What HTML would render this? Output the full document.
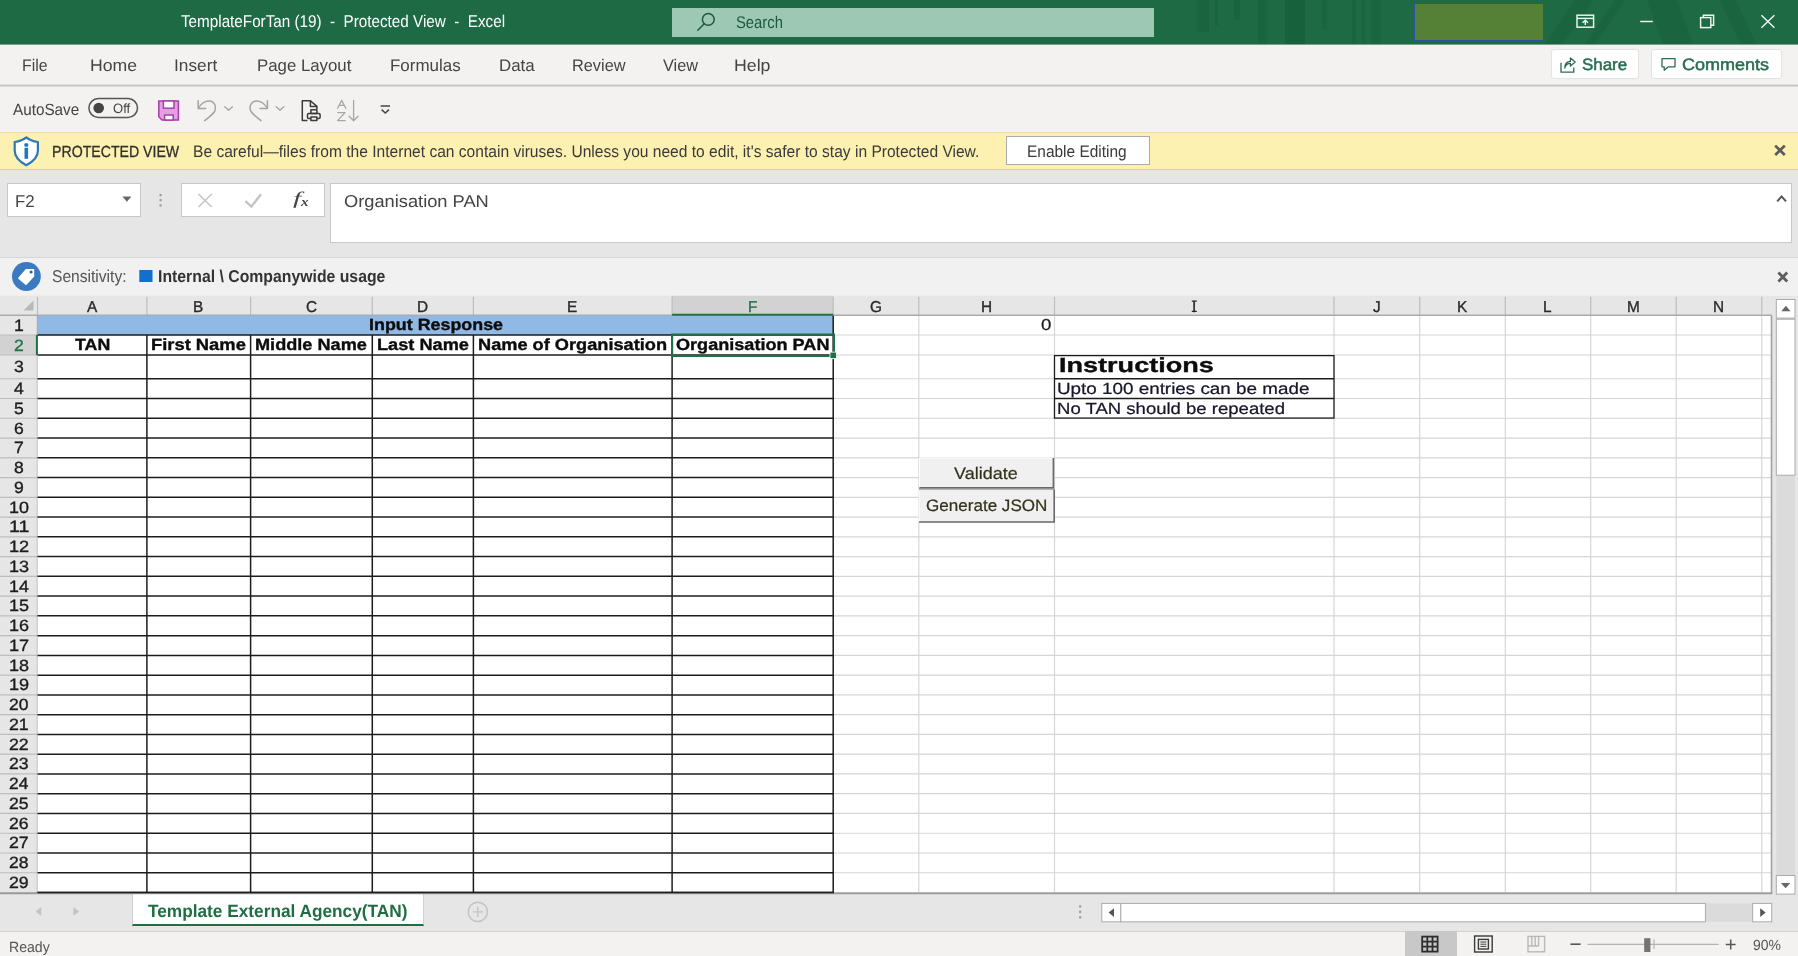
<!DOCTYPE html>
<html><head><meta charset="utf-8"><title>TemplateForTan (19) - Protected View - Excel</title>
<style>
*{margin:0;padding:0;box-sizing:border-box;}
html,body{text-rendering:geometricPrecision;width:1798px;height:956px;overflow:hidden;background:#e6e6e6;font-family:"Liberation Sans",sans-serif;}
body{position:relative;}
.b{position:absolute;}
.t{position:absolute;white-space:pre;line-height:1;transform-origin:0 0;font-family:"Liberation Sans",sans-serif;}
.ov{position:absolute;left:0;top:0;}
#title{left:0;top:0;width:1798px;height:45px;background:#1d6a44;overflow:hidden;border-bottom:1px solid #73a089;}
#title i{position:absolute;top:0;height:44px;background:rgba(0,40,20,0.08);display:block;}
#search{left:671.6px;top:7.8px;width:482.4px;height:29px;background:#9dc8b4;}
#redact{left:1413.6px;top:3.2px;width:130.4px;height:38px;background:#548135;border:1.5px solid #3050a6;}
#ribbon{left:0;top:45px;width:1798px;height:87px;background:#f3f2f1;}
#ribsep{left:0;top:83.6px;width:1798px;height:3.4px;background:linear-gradient(#ecebea,#c9c8c7 45%,#c4c3c2 60%,#e9e8e7);}
.rbtn{background:#fff;border:1px solid #e5e3e1;border-radius:3px;}
#pv{left:0;top:131.9px;width:1798px;height:37.8px;background:#fcf1b0;border-top:1px solid #ebe0a2;border-bottom:1px solid #ddd193;}
#enable{left:1006.4px;top:135.8px;width:143.2px;height:28.8px;background:#fff;border:1px solid #ababab;}
#fbar{left:0;top:169.7px;width:1798px;height:87.5px;background:#e6e6e6;}
.wbox{background:#fff;border:1px solid #c8c8c8;}
#sens{left:0;top:257.2px;width:1798px;height:38.4px;background:#f1f1f1;border-top:1.2px solid #d6d6d6;}
#tabbar{left:0;top:893.6px;width:1798px;height:37.6px;background:#e6e6e6;}
#sheet{left:132.4px;top:893.8px;width:291.4px;height:32px;background:#fff;border-bottom:2.6px solid #1f7145;border-left:1px solid #d0d0d0;border-right:1px solid #d0d0d0;}
#status{left:0;top:930.8px;width:1798px;height:25.2px;background:#f3f2f1;border-top:1px solid #d2d2d2;}
#normalbtn{left:1404.8px;top:931.4px;width:52.6px;height:24.6px;background:#c8c8c8;}
.ui{position:absolute;left:0;top:0;width:1798px;height:956px;will-change:transform;}
.sheet{position:absolute;left:0;top:0;width:0;height:0;}

</style></head>
<body>
<div class="b" id="title">
<i style="left:1197px;width:12px;height:32px"></i><i style="left:1215px;width:3px;height:26px"></i><i style="left:1234px;width:6px;height:20px"></i><i style="left:1258px;width:9px"></i><i style="left:1285px;width:20px;background:rgba(0,40,20,0.14)"></i><i style="left:1322px;width:5px;height:30px"></i><i style="left:1352px;width:4px"></i><i style="left:1362px;width:3px"></i><i style="left:1371px;width:10px"></i><i style="left:1560px;width:18px;transform:skewX(-35deg)"></i><i style="left:1600px;width:10px;transform:skewX(-35deg)"></i><i style="left:1655px;width:30px;transform:skewX(20deg)"></i><i style="left:1730px;width:16px;transform:skewX(25deg)"></i>
</div>
<div class="b" id="search"></div>
<div class="b" id="redact"></div>
<div class="b" id="ribbon"></div>
<div class="b" id="ribsep"></div>
<div class="b rbtn" style="left:1551.2px;top:49.4px;width:87.8px;height:30px"></div>
<div class="b rbtn" style="left:1651.2px;top:49.4px;width:130.6px;height:30px"></div>
<div class="b" id="pv"></div>
<div class="b" id="enable"></div>
<div class="b" id="fbar"></div>
<div class="b wbox" style="left:6.8px;top:183.4px;width:133.9px;height:33.8px"></div>
<div class="b wbox" style="left:180.5px;top:183.4px;width:144.4px;height:33.8px"></div>
<div class="b wbox" style="left:329.5px;top:183.4px;width:1462.8px;height:60px"></div>
<div class="b" id="sens"></div>
<div class="b" id="tabbar"></div>
<div class="b" id="sheet"></div>
<div class="b" id="status"></div>
<div class="b" id="normalbtn"></div>

<svg class="ov" width="1798" height="956" viewBox="0 0 1798 956">
<rect x="0" y="295.8" width="1771.5" height="19.5" fill="#e6e6e6"/>
<rect x="0" y="315.3" width="37.5" height="577.21" fill="#e6e6e6"/>
<rect x="37.5" y="315.3" width="1734.0" height="577.21" fill="#ffffff"/>
<rect x="672.1" y="295.8" width="161.10000000000002" height="19.5" fill="#d2d2d2"/>
<rect x="0" y="335.0" width="37.5" height="20.0" fill="#d2d2d2"/>
<line x1="37.5" y1="335.0" x2="1771.5" y2="335.0" stroke="#d6d6d6" stroke-width="1.2"/>
<line x1="37.5" y1="355.0" x2="1771.5" y2="355.0" stroke="#d6d6d6" stroke-width="1.2"/>
<line x1="37.5" y1="378.75" x2="1771.5" y2="378.75" stroke="#d6d6d6" stroke-width="1.2"/>
<line x1="37.5" y1="398.51" x2="1771.5" y2="398.51" stroke="#d6d6d6" stroke-width="1.2"/>
<line x1="37.5" y1="418.27" x2="1771.5" y2="418.27" stroke="#d6d6d6" stroke-width="1.2"/>
<line x1="37.5" y1="438.03" x2="1771.5" y2="438.03" stroke="#d6d6d6" stroke-width="1.2"/>
<line x1="37.5" y1="457.79" x2="1771.5" y2="457.79" stroke="#d6d6d6" stroke-width="1.2"/>
<line x1="37.5" y1="477.55" x2="1771.5" y2="477.55" stroke="#d6d6d6" stroke-width="1.2"/>
<line x1="37.5" y1="497.31" x2="1771.5" y2="497.31" stroke="#d6d6d6" stroke-width="1.2"/>
<line x1="37.5" y1="517.07" x2="1771.5" y2="517.07" stroke="#d6d6d6" stroke-width="1.2"/>
<line x1="37.5" y1="536.83" x2="1771.5" y2="536.83" stroke="#d6d6d6" stroke-width="1.2"/>
<line x1="37.5" y1="556.59" x2="1771.5" y2="556.59" stroke="#d6d6d6" stroke-width="1.2"/>
<line x1="37.5" y1="576.35" x2="1771.5" y2="576.35" stroke="#d6d6d6" stroke-width="1.2"/>
<line x1="37.5" y1="596.11" x2="1771.5" y2="596.11" stroke="#d6d6d6" stroke-width="1.2"/>
<line x1="37.5" y1="615.87" x2="1771.5" y2="615.87" stroke="#d6d6d6" stroke-width="1.2"/>
<line x1="37.5" y1="635.63" x2="1771.5" y2="635.63" stroke="#d6d6d6" stroke-width="1.2"/>
<line x1="37.5" y1="655.3900000000001" x2="1771.5" y2="655.3900000000001" stroke="#d6d6d6" stroke-width="1.2"/>
<line x1="37.5" y1="675.1500000000001" x2="1771.5" y2="675.1500000000001" stroke="#d6d6d6" stroke-width="1.2"/>
<line x1="37.5" y1="694.9100000000001" x2="1771.5" y2="694.9100000000001" stroke="#d6d6d6" stroke-width="1.2"/>
<line x1="37.5" y1="714.6700000000001" x2="1771.5" y2="714.6700000000001" stroke="#d6d6d6" stroke-width="1.2"/>
<line x1="37.5" y1="734.4300000000001" x2="1771.5" y2="734.4300000000001" stroke="#d6d6d6" stroke-width="1.2"/>
<line x1="37.5" y1="754.19" x2="1771.5" y2="754.19" stroke="#d6d6d6" stroke-width="1.2"/>
<line x1="37.5" y1="773.95" x2="1771.5" y2="773.95" stroke="#d6d6d6" stroke-width="1.2"/>
<line x1="37.5" y1="793.71" x2="1771.5" y2="793.71" stroke="#d6d6d6" stroke-width="1.2"/>
<line x1="37.5" y1="813.47" x2="1771.5" y2="813.47" stroke="#d6d6d6" stroke-width="1.2"/>
<line x1="37.5" y1="833.23" x2="1771.5" y2="833.23" stroke="#d6d6d6" stroke-width="1.2"/>
<line x1="37.5" y1="852.99" x2="1771.5" y2="852.99" stroke="#d6d6d6" stroke-width="1.2"/>
<line x1="37.5" y1="872.75" x2="1771.5" y2="872.75" stroke="#d6d6d6" stroke-width="1.2"/>
<line x1="37.5" y1="892.51" x2="1771.5" y2="892.51" stroke="#d6d6d6" stroke-width="1.2"/>
<line x1="146.9" y1="315.3" x2="146.9" y2="892.51" stroke="#d6d6d6" stroke-width="1.2"/>
<line x1="250.6" y1="315.3" x2="250.6" y2="892.51" stroke="#d6d6d6" stroke-width="1.2"/>
<line x1="372.3" y1="315.3" x2="372.3" y2="892.51" stroke="#d6d6d6" stroke-width="1.2"/>
<line x1="473.4" y1="315.3" x2="473.4" y2="892.51" stroke="#d6d6d6" stroke-width="1.2"/>
<line x1="672.1" y1="315.3" x2="672.1" y2="892.51" stroke="#d6d6d6" stroke-width="1.2"/>
<line x1="833.2" y1="315.3" x2="833.2" y2="892.51" stroke="#d6d6d6" stroke-width="1.2"/>
<line x1="918.8" y1="315.3" x2="918.8" y2="892.51" stroke="#d6d6d6" stroke-width="1.2"/>
<line x1="1054.5" y1="315.3" x2="1054.5" y2="892.51" stroke="#d6d6d6" stroke-width="1.2"/>
<line x1="1334" y1="315.3" x2="1334" y2="892.51" stroke="#d6d6d6" stroke-width="1.2"/>
<line x1="1419.7" y1="315.3" x2="1419.7" y2="892.51" stroke="#d6d6d6" stroke-width="1.2"/>
<line x1="1505.3" y1="315.3" x2="1505.3" y2="892.51" stroke="#d6d6d6" stroke-width="1.2"/>
<line x1="1590.7" y1="315.3" x2="1590.7" y2="892.51" stroke="#d6d6d6" stroke-width="1.2"/>
<line x1="1676.2" y1="315.3" x2="1676.2" y2="892.51" stroke="#d6d6d6" stroke-width="1.2"/>
<line x1="1761.8" y1="315.3" x2="1761.8" y2="892.51" stroke="#d6d6d6" stroke-width="1.2"/>
<line x1="37.5" y1="296.8" x2="37.5" y2="315.3" stroke="#bdbdbd" stroke-width="1.2"/>
<line x1="146.9" y1="296.8" x2="146.9" y2="315.3" stroke="#bdbdbd" stroke-width="1.2"/>
<line x1="250.6" y1="296.8" x2="250.6" y2="315.3" stroke="#bdbdbd" stroke-width="1.2"/>
<line x1="372.3" y1="296.8" x2="372.3" y2="315.3" stroke="#bdbdbd" stroke-width="1.2"/>
<line x1="473.4" y1="296.8" x2="473.4" y2="315.3" stroke="#bdbdbd" stroke-width="1.2"/>
<line x1="672.1" y1="296.8" x2="672.1" y2="315.3" stroke="#bdbdbd" stroke-width="1.2"/>
<line x1="833.2" y1="296.8" x2="833.2" y2="315.3" stroke="#bdbdbd" stroke-width="1.2"/>
<line x1="918.8" y1="296.8" x2="918.8" y2="315.3" stroke="#bdbdbd" stroke-width="1.2"/>
<line x1="1054.5" y1="296.8" x2="1054.5" y2="315.3" stroke="#bdbdbd" stroke-width="1.2"/>
<line x1="1334" y1="296.8" x2="1334" y2="315.3" stroke="#bdbdbd" stroke-width="1.2"/>
<line x1="1419.7" y1="296.8" x2="1419.7" y2="315.3" stroke="#bdbdbd" stroke-width="1.2"/>
<line x1="1505.3" y1="296.8" x2="1505.3" y2="315.3" stroke="#bdbdbd" stroke-width="1.2"/>
<line x1="1590.7" y1="296.8" x2="1590.7" y2="315.3" stroke="#bdbdbd" stroke-width="1.2"/>
<line x1="1676.2" y1="296.8" x2="1676.2" y2="315.3" stroke="#bdbdbd" stroke-width="1.2"/>
<line x1="1761.8" y1="296.8" x2="1761.8" y2="315.3" stroke="#bdbdbd" stroke-width="1.2"/>
<line x1="0" y1="335.0" x2="37.5" y2="335.0" stroke="#bdbdbd" stroke-width="1.2"/>
<line x1="0" y1="355.0" x2="37.5" y2="355.0" stroke="#bdbdbd" stroke-width="1.2"/>
<line x1="0" y1="378.75" x2="37.5" y2="378.75" stroke="#bdbdbd" stroke-width="1.2"/>
<line x1="0" y1="398.51" x2="37.5" y2="398.51" stroke="#bdbdbd" stroke-width="1.2"/>
<line x1="0" y1="418.27" x2="37.5" y2="418.27" stroke="#bdbdbd" stroke-width="1.2"/>
<line x1="0" y1="438.03" x2="37.5" y2="438.03" stroke="#bdbdbd" stroke-width="1.2"/>
<line x1="0" y1="457.79" x2="37.5" y2="457.79" stroke="#bdbdbd" stroke-width="1.2"/>
<line x1="0" y1="477.55" x2="37.5" y2="477.55" stroke="#bdbdbd" stroke-width="1.2"/>
<line x1="0" y1="497.31" x2="37.5" y2="497.31" stroke="#bdbdbd" stroke-width="1.2"/>
<line x1="0" y1="517.07" x2="37.5" y2="517.07" stroke="#bdbdbd" stroke-width="1.2"/>
<line x1="0" y1="536.83" x2="37.5" y2="536.83" stroke="#bdbdbd" stroke-width="1.2"/>
<line x1="0" y1="556.59" x2="37.5" y2="556.59" stroke="#bdbdbd" stroke-width="1.2"/>
<line x1="0" y1="576.35" x2="37.5" y2="576.35" stroke="#bdbdbd" stroke-width="1.2"/>
<line x1="0" y1="596.11" x2="37.5" y2="596.11" stroke="#bdbdbd" stroke-width="1.2"/>
<line x1="0" y1="615.87" x2="37.5" y2="615.87" stroke="#bdbdbd" stroke-width="1.2"/>
<line x1="0" y1="635.63" x2="37.5" y2="635.63" stroke="#bdbdbd" stroke-width="1.2"/>
<line x1="0" y1="655.3900000000001" x2="37.5" y2="655.3900000000001" stroke="#bdbdbd" stroke-width="1.2"/>
<line x1="0" y1="675.1500000000001" x2="37.5" y2="675.1500000000001" stroke="#bdbdbd" stroke-width="1.2"/>
<line x1="0" y1="694.9100000000001" x2="37.5" y2="694.9100000000001" stroke="#bdbdbd" stroke-width="1.2"/>
<line x1="0" y1="714.6700000000001" x2="37.5" y2="714.6700000000001" stroke="#bdbdbd" stroke-width="1.2"/>
<line x1="0" y1="734.4300000000001" x2="37.5" y2="734.4300000000001" stroke="#bdbdbd" stroke-width="1.2"/>
<line x1="0" y1="754.19" x2="37.5" y2="754.19" stroke="#bdbdbd" stroke-width="1.2"/>
<line x1="0" y1="773.95" x2="37.5" y2="773.95" stroke="#bdbdbd" stroke-width="1.2"/>
<line x1="0" y1="793.71" x2="37.5" y2="793.71" stroke="#bdbdbd" stroke-width="1.2"/>
<line x1="0" y1="813.47" x2="37.5" y2="813.47" stroke="#bdbdbd" stroke-width="1.2"/>
<line x1="0" y1="833.23" x2="37.5" y2="833.23" stroke="#bdbdbd" stroke-width="1.2"/>
<line x1="0" y1="852.99" x2="37.5" y2="852.99" stroke="#bdbdbd" stroke-width="1.2"/>
<line x1="0" y1="872.75" x2="37.5" y2="872.75" stroke="#bdbdbd" stroke-width="1.2"/>
<line x1="0" y1="892.51" x2="37.5" y2="892.51" stroke="#bdbdbd" stroke-width="1.2"/>
<line x1="0" y1="315.3" x2="1771.5" y2="315.3" stroke="#ababab" stroke-width="1.4"/>
<line x1="37.5" y1="315.3" x2="37.5" y2="892.51" stroke="#a6a6a6" stroke-width="1.4"/>
<path d="M33.5 300.5 V310.5 H23.5 Z" fill="#b8b8b8"/>
<rect x="37.5" y="315.8" width="795.7" height="19.20000000000001" fill="#91b9e6"/>
<rect x="37.5" y="335.0" width="795.7" height="557.51" fill="#ffffff"/>
<line x1="37.5" y1="335.0" x2="833.9000000000001" y2="335.0" stroke="#1c1c1c" stroke-width="1.5"/>
<line x1="37.5" y1="355.0" x2="833.9000000000001" y2="355.0" stroke="#1c1c1c" stroke-width="1.5"/>
<line x1="37.5" y1="378.75" x2="833.9000000000001" y2="378.75" stroke="#1c1c1c" stroke-width="1.5"/>
<line x1="37.5" y1="398.51" x2="833.9000000000001" y2="398.51" stroke="#1c1c1c" stroke-width="1.5"/>
<line x1="37.5" y1="418.27" x2="833.9000000000001" y2="418.27" stroke="#1c1c1c" stroke-width="1.5"/>
<line x1="37.5" y1="438.03" x2="833.9000000000001" y2="438.03" stroke="#1c1c1c" stroke-width="1.5"/>
<line x1="37.5" y1="457.79" x2="833.9000000000001" y2="457.79" stroke="#1c1c1c" stroke-width="1.5"/>
<line x1="37.5" y1="477.55" x2="833.9000000000001" y2="477.55" stroke="#1c1c1c" stroke-width="1.5"/>
<line x1="37.5" y1="497.31" x2="833.9000000000001" y2="497.31" stroke="#1c1c1c" stroke-width="1.5"/>
<line x1="37.5" y1="517.07" x2="833.9000000000001" y2="517.07" stroke="#1c1c1c" stroke-width="1.5"/>
<line x1="37.5" y1="536.83" x2="833.9000000000001" y2="536.83" stroke="#1c1c1c" stroke-width="1.5"/>
<line x1="37.5" y1="556.59" x2="833.9000000000001" y2="556.59" stroke="#1c1c1c" stroke-width="1.5"/>
<line x1="37.5" y1="576.35" x2="833.9000000000001" y2="576.35" stroke="#1c1c1c" stroke-width="1.5"/>
<line x1="37.5" y1="596.11" x2="833.9000000000001" y2="596.11" stroke="#1c1c1c" stroke-width="1.5"/>
<line x1="37.5" y1="615.87" x2="833.9000000000001" y2="615.87" stroke="#1c1c1c" stroke-width="1.5"/>
<line x1="37.5" y1="635.63" x2="833.9000000000001" y2="635.63" stroke="#1c1c1c" stroke-width="1.5"/>
<line x1="37.5" y1="655.3900000000001" x2="833.9000000000001" y2="655.3900000000001" stroke="#1c1c1c" stroke-width="1.5"/>
<line x1="37.5" y1="675.1500000000001" x2="833.9000000000001" y2="675.1500000000001" stroke="#1c1c1c" stroke-width="1.5"/>
<line x1="37.5" y1="694.9100000000001" x2="833.9000000000001" y2="694.9100000000001" stroke="#1c1c1c" stroke-width="1.5"/>
<line x1="37.5" y1="714.6700000000001" x2="833.9000000000001" y2="714.6700000000001" stroke="#1c1c1c" stroke-width="1.5"/>
<line x1="37.5" y1="734.4300000000001" x2="833.9000000000001" y2="734.4300000000001" stroke="#1c1c1c" stroke-width="1.5"/>
<line x1="37.5" y1="754.19" x2="833.9000000000001" y2="754.19" stroke="#1c1c1c" stroke-width="1.5"/>
<line x1="37.5" y1="773.95" x2="833.9000000000001" y2="773.95" stroke="#1c1c1c" stroke-width="1.5"/>
<line x1="37.5" y1="793.71" x2="833.9000000000001" y2="793.71" stroke="#1c1c1c" stroke-width="1.5"/>
<line x1="37.5" y1="813.47" x2="833.9000000000001" y2="813.47" stroke="#1c1c1c" stroke-width="1.5"/>
<line x1="37.5" y1="833.23" x2="833.9000000000001" y2="833.23" stroke="#1c1c1c" stroke-width="1.5"/>
<line x1="37.5" y1="852.99" x2="833.9000000000001" y2="852.99" stroke="#1c1c1c" stroke-width="1.5"/>
<line x1="37.5" y1="872.75" x2="833.9000000000001" y2="872.75" stroke="#1c1c1c" stroke-width="1.5"/>
<line x1="37.5" y1="892.51" x2="833.9000000000001" y2="892.51" stroke="#1c1c1c" stroke-width="1.5"/>
<line x1="146.9" y1="335.0" x2="146.9" y2="892.51" stroke="#1c1c1c" stroke-width="1.5"/>
<line x1="250.6" y1="335.0" x2="250.6" y2="892.51" stroke="#1c1c1c" stroke-width="1.5"/>
<line x1="372.3" y1="335.0" x2="372.3" y2="892.51" stroke="#1c1c1c" stroke-width="1.5"/>
<line x1="473.4" y1="335.0" x2="473.4" y2="892.51" stroke="#1c1c1c" stroke-width="1.5"/>
<line x1="672.1" y1="335.0" x2="672.1" y2="892.51" stroke="#1c1c1c" stroke-width="1.5"/>
<line x1="833.2" y1="335.0" x2="833.2" y2="892.51" stroke="#1c1c1c" stroke-width="1.5"/>
<line x1="833.2" y1="315.7" x2="833.2" y2="335.0" stroke="#1c1c1c" stroke-width="1.5"/>
<rect x="1054.5" y="355.6" width="279.5" height="62.469999999999985" fill="#fff" stroke="#1c1c1c" stroke-width="1.3"/>
<line x1="1054.5" y1="378.75" x2="1334" y2="378.75" stroke="#1c1c1c" stroke-width="1.3"/>
<line x1="1054.5" y1="398.51" x2="1334" y2="398.51" stroke="#1c1c1c" stroke-width="1.3"/>
<rect x="672.1" y="334.6" width="161.80000000000007" height="21.299999999999976" fill="none" stroke="#1f7145" stroke-width="2.2"/>
<rect x="830.0" y="352.1" width="6.4" height="6.4" fill="#1f7145" stroke="#fff" stroke-width="0.8"/>
<line x1="672.1" y1="314.7" x2="833.2" y2="314.7" stroke="#1f7145" stroke-width="2"/>
<line x1="36.9" y1="335.0" x2="36.9" y2="355.0" stroke="#1f7145" stroke-width="2"/>
<line x1="1771.5" y1="315.3" x2="1771.5" y2="893.51" stroke="#a0a0a0" stroke-width="1.6"/>
<line x1="0" y1="893.31" x2="1772.3" y2="893.31" stroke="#9a9a9a" stroke-width="1.8"/>
<line x1="37.5" y1="892.51" x2="833.9000000000001" y2="892.51" stroke="#1c1c1c" stroke-width="1.5"/>
<!-- search magnifier -->
<g fill="none" stroke="#1d5a3a" stroke-width="1.5" stroke-linecap="round">
<circle cx="708.3" cy="19.4" r="5.9"/><path d="M704 24 L697.8 30.2"/>
</g>
<!-- window controls -->
<g fill="none" stroke="#eef6f1" stroke-width="1.45">
<rect x="1577" y="15.2" width="16.6" height="12"/><path d="M1577 18.4 H1593.6" /><path d="M1585.3 25 V20.4 M1582.6 22.8 L1585.3 20.2 L1588 22.8"/>
<path d="M1640.2 21.5 H1652.8"/>
<path d="M1703.4 17.4 V15.2 H1713.6 V25.2 H1711"/><rect x="1700.6" y="17.6" width="10.2" height="10"/>
<path d="M1761.4 15.2 L1774.4 27.8 M1774.4 15.2 L1761.4 27.8"/>
</g>
<!-- share icon -->
<g fill="none" stroke="#2a6c4e" stroke-width="1.3" stroke-linejoin="round">
<path d="M1561 62.8 V72.2 H1573.8 V67.4"/>
<path d="M1564.8 68 C1564.8 64 1567 61.6 1570.4 61.4 V58 L1575.2 62 L1570.4 66 V63.4 C1567.6 63.4 1565.6 65 1564.8 68 Z"/>
</g>
<!-- comment icon -->
<g fill="none" stroke="#2a6c4e" stroke-width="1.3" stroke-linejoin="round">
<path d="M1662 58.6 H1675 V66.8 H1668.4 L1664.2 70.2 V66.8 H1662 Z"/>
</g>
<!-- autosave toggle -->
<rect x="88.9" y="98.6" width="48.6" height="18.8" rx="9.4" fill="none" stroke="#555" stroke-width="1.5"/>
<circle cx="98.7" cy="108" r="5.3" fill="#444"/>
<!-- save icon -->
<g>
<path d="M158.8 101 H178.4 V120 H162 L158.8 116.8 Z" fill="#e69ee4" stroke="#a440a8" stroke-width="1.5" stroke-linejoin="miter"/>
<rect x="163.4" y="101" width="10.6" height="7.2" fill="#fff" stroke="#a440a8" stroke-width="1.5"/>
<rect x="164.6" y="115" width="8.6" height="5" fill="#fff" stroke="#a440a8" stroke-width="1.5"/>
</g>
<!-- undo -->
<g fill="none" stroke="#a3a3a3" stroke-width="1.5" stroke-linecap="round" stroke-linejoin="round">
<path d="M198.2 100.8 V108.4 H205.6"/>
<path d="M198.6 108 C201 103.4 205.6 100.4 210 101 C214.6 101.8 216.6 106.4 215 110.6 C213.6 114 209.4 116.8 204.6 120.6"/>
<path d="M224.8 106.8 L228.6 110.2 L232.4 106.8" stroke-width="1.3"/>
<!-- redo -->
<path d="M267.4 100.8 V108.4 H260"/>
<path d="M267 108 C264.6 103.4 260 100.4 255.6 101 C251 101.8 249 106.4 250.6 110.6 C252 114 256.2 116.8 261 120.6"/>
<path d="M276.2 106.8 L280 110.2 L283.8 106.8" stroke-width="1.3"/>
</g>
<!-- print preview -->
<g fill="none" stroke="#3a3a3a" stroke-width="1.5" stroke-linejoin="round">
<path d="M307.4 120.4 H302.3 V100.7 H310.4 L316.9 106.4 V109"/>
<path d="M310.4 100.7 V106.4 H316.9"/>
<rect x="310.9" y="109.8" width="6" height="3.8"/>
<rect x="307.5" y="113.6" width="12.6" height="4.8" rx="1.2"/>
<rect x="310.9" y="116.9" width="6" height="3.5" fill="#f3f2f1"/>
</g>
<!-- sort az -->
<g fill="none" stroke="#a6a6a6" stroke-width="1.3" stroke-linejoin="round" stroke-linecap="round">
<path d="M337.6 108.2 L341.7 100.4 L345.8 108.2 M339.2 105.4 H344.2"/>
<path d="M337.8 112.6 H345 L337.6 120.6 H345.2"/>
<path d="M353.6 100.4 V120.6 M349.2 116.2 L353.6 120.8 L358 116.2"/>
</g>
<!-- customize qat -->
<g fill="none" stroke="#444" stroke-width="1.5">
<path d="M380.6 106 H390"/><path d="M381.6 109.6 L385.3 113 L389 109.6"/>
</g>
<!-- shield -->
<path d="M26.3 137.4 C29.6 140.2 33.6 141.4 37.9 142 V150.5 C37.9 156.5 33.4 161.6 26.3 165.2 C19.2 161.6 14.7 156.5 14.7 150.5 V142 C19 141.4 23 140.2 26.3 137.4 Z" fill="#fff" stroke="#2f78b7" stroke-width="2.2" stroke-linejoin="round"/>
<rect x="24.4" y="143.3" width="3.8" height="3.4" rx="1" fill="#1f78c1"/><rect x="24.5" y="147.8" width="3.6" height="11" fill="#1f78c1"/>
<!-- pv close -->
<path d="M1775.2 145.6 L1784.8 155 M1784.8 145.6 L1775.2 155" stroke="#5a5a5a" stroke-width="2.7" fill="none"/>
<!-- name box dropdown -->
<path d="M122.4 196.4 H131.4 L126.9 201.8 Z" fill="#666"/>
<g fill="#9c9c9c"><rect x="159.5" y="194" width="2.2" height="2.2"/><rect x="159.5" y="199.1" width="2.2" height="2.2"/><rect x="159.5" y="204.3" width="2.2" height="2.2"/></g>
<!-- x / check -->
<g fill="none" stroke="#c4c4c4" stroke-width="1.5">
<path d="M198.4 194 L211.8 207 M211.8 194 L198.4 207"/>
<path d="M245.4 201.2 L251.4 206.6 L261 194.2" stroke-width="2.4"/>
</g>
<!-- formula expand chevron -->
<path d="M1777.2 201.4 L1781.6 196.4 L1786 201.4" fill="none" stroke="#555" stroke-width="2"/>
<!-- sensitivity icon -->
<circle cx="26.4" cy="276.5" r="14.4" fill="#3c7abf"/>
<path d="M34.2 269 H25.9 L18.4 277.6 Q17.8 278.4 18.6 279 L25.4 284.8 Q26.2 285.4 26.9 284.6 L34.2 276.6 Z" fill="#fff"/>
<circle cx="31.1" cy="271.9" r="1.5" fill="#2c5d99"/>
<rect x="139.3" y="270" width="13.2" height="12" fill="#1170cf"/>
<path d="M1778.4 272.6 L1787.2 281.6 M1787.2 272.6 L1778.4 281.6" stroke="#5e5e5e" stroke-width="2.8" fill="none"/>
<!-- form buttons -->
<g>
<rect x="919.4" y="458" width="134.4" height="30.2" fill="#f0f0f0"/>
<path d="M919.4 488.2 V458 H1053.8" fill="none" stroke="#ffffff" stroke-width="1"/>
<path d="M919.4 487.8 H1053.4 V458" fill="none" stroke="#6a6a6a" stroke-width="1.6"/>
<rect x="919" y="489.4" width="135.6" height="33" fill="#f0f0f0"/>
<path d="M919 522.4 V489.4 H1054.6" fill="none" stroke="#ffffff" stroke-width="1"/>
<path d="M919 522 H1054.2 V489.4" fill="none" stroke="#6a6a6a" stroke-width="1.6"/>
<path d="M919 489 H1054.4" stroke="#6a6a6a" stroke-width="1.2"/>
</g>
<!-- vertical scrollbar -->
<rect x="1776.3" y="318" width="18.7" height="558" fill="#dbdbdb"/>
<rect x="1776.3" y="299.5" width="18.7" height="18.6" fill="#fff" stroke="#ababab" stroke-width="1"/>
<rect x="1776.3" y="319.2" width="18.7" height="156" fill="#fff" stroke="#ababab" stroke-width="1"/>
<rect x="1776.3" y="875.5" width="18.7" height="18.6" fill="#fff" stroke="#ababab" stroke-width="1"/>
<path d="M1781.3 311.3 H1790.5 L1785.9 305.8 Z" fill="#666"/>
<path d="M1780.9 882.9 H1790.3 L1785.6 888.2 Z" fill="#666"/>
<!-- sheet nav -->
<path d="M41.2 907 V915.8 L35.6 911.4 Z" fill="#c3c3c3"/>
<path d="M73.4 907 V915.8 L79 911.4 Z" fill="#c3c3c3"/>
<g fill="none" stroke="#c2c2c2" stroke-width="1.4"><circle cx="477.8" cy="911.9" r="9.6"/><path d="M472.6 911.9 H483 M477.8 906.7 V917.1"/></g>
<g fill="#9c9c9c"><rect x="1079.1" y="905.3" width="2.2" height="2.2"/><rect x="1079.1" y="910.7" width="2.2" height="2.2"/><rect x="1079.1" y="916.2" width="2.2" height="2.2"/></g>
<!-- horizontal scrollbar -->
<rect x="1120" y="903.4" width="633" height="18.4" fill="#dbdbdb"/>
<rect x="1101.8" y="903.4" width="19" height="18.4" fill="#fff" stroke="#ababab" stroke-width="1"/>
<rect x="1120.8" y="903.4" width="584.6" height="18.4" fill="#fff" stroke="#ababab" stroke-width="1"/>
<rect x="1752.7" y="903.4" width="19" height="18.4" fill="#fff" stroke="#ababab" stroke-width="1"/>
<path d="M1114 908.2 V917 L1108.6 912.6 Z" fill="#555"/>
<path d="M1760.2 908.2 V917 L1765.6 912.6 Z" fill="#555"/>
<!-- status icons -->
<g fill="none" stroke="#2e2e2e" stroke-width="1.8">
<rect x="1422.2" y="936.6" width="15.4" height="15"/><path d="M1427.3 936.6 V951.6 M1432.5 936.6 V951.6 M1422.2 941.6 H1437.6 M1422.2 946.6 H1437.6"/>
</g>
<g fill="none" stroke="#3a3a3a" stroke-width="1.4">
<rect x="1474.6" y="936" width="17.6" height="16"/><rect x="1478.4" y="939.4" width="10" height="9.6"/><path d="M1480.4 942 H1486.4 M1480.4 944.2 H1486.4 M1480.4 946.4 H1486.4" stroke-width="1"/>
</g>
<g fill="none" stroke="#b8b8b8" stroke-width="1.4">
<rect x="1528" y="936.4" width="16.6" height="15.4"/><path d="M1528 946 H1538.6 M1531.8 936.4 V945.4 M1535.2 936.4 V945.4 M1538.6 936.4 V946"/>
</g>
<path d="M1570.4 944.2 H1580.6" stroke="#555" stroke-width="1.6"/>
<path d="M1587.4 944.4 H1718.6" stroke="#b4b4b4" stroke-width="1.2"/>
<path d="M1654 939.6 V949" stroke="#b4b4b4" stroke-width="1.2"/>
<rect x="1644.2" y="938.2" width="6.2" height="13.8" fill="#737373"/>
<path d="M1725.8 944.4 H1735.6 M1730.7 939.6 V949.4" stroke="#555" stroke-width="1.5"/>
<!-- serif on column I header -->
<path d="M1191.8 301.1 H1196.8 M1191.8 311.4 H1196.8" stroke="#26262e" stroke-width="1.3" fill="none"/>

</svg>
<div class="ui">
<span class="t" style="left:180.73px;top:12.70px;font-size:17.01px;color:#ffffff;transform:scaleX(0.8963);">TemplateForTan (19)  -  Protected View  -  Excel</span>
<span class="t" style="left:735.99px;top:14.00px;font-size:17.01px;color:#1d5a3a;transform:scaleX(0.8708);">Search</span>
<span class="t" style="left:21.67px;top:58.20px;font-size:16.86px;color:#454443;transform:scaleX(0.9448);">File</span>
<span class="t" style="left:89.84px;top:58.20px;font-size:16.86px;color:#454443;transform:scaleX(1.0466);">Home</span>
<span class="t" style="left:173.76px;top:58.20px;font-size:16.86px;color:#454443;transform:scaleX(1.0251);">Insert</span>
<span class="t" style="left:257.20px;top:58.20px;font-size:16.86px;color:#454443;transform:scaleX(0.9969);">Page Layout</span>
<span class="t" style="left:390.19px;top:58.20px;font-size:16.86px;color:#454443;transform:scaleX(1.0068);">Formulas</span>
<span class="t" style="left:498.60px;top:58.20px;font-size:16.86px;color:#454443;transform:scaleX(1.0019);">Data</span>
<span class="t" style="left:572.24px;top:58.20px;font-size:16.86px;color:#454443;transform:scaleX(0.9685);">Review</span>
<span class="t" style="left:663.00px;top:58.20px;font-size:16.86px;color:#454443;transform:scaleX(0.9680);">View</span>
<span class="t" style="left:734.13px;top:58.20px;font-size:16.86px;color:#454443;transform:scaleX(1.0521);">Help</span>
<span class="t" style="left:1581.63px;top:57.45px;font-size:16.42px;color:#2a6c4e;transform:scaleX(1.0310);-webkit-text-stroke:0.5px currentColor;">Share</span>
<span class="t" style="left:1681.67px;top:57.45px;font-size:16.42px;color:#2a6c4e;transform:scaleX(1.0978);-webkit-text-stroke:0.5px currentColor;">Comments</span>
<span class="t" style="left:13.30px;top:101.80px;font-size:16.28px;color:#444;transform:scaleX(0.9394);">AutoSave</span>
<span class="t" style="left:113.02px;top:102.00px;font-size:13.52px;color:#444;transform:scaleX(0.9636);">Off</span>
<span class="t" style="left:52.01px;top:143.75px;font-size:16.13px;color:#2f2f2f;transform:scaleX(0.8773);-webkit-text-stroke:0.3px currentColor;">PROTECTED VIEW</span>
<span class="t" style="left:192.78px;top:143.90px;font-size:16.57px;color:#3a3a3a;transform:scaleX(0.9406);">Be careful—files from the Internet can contain viruses. Unless you need to edit, it's safer to stay in Protected View.</span>
<span class="t" style="left:1026.79px;top:143.90px;font-size:16.57px;color:#3a3a3a;transform:scaleX(0.9327);">Enable Editing</span>
<span class="t" style="left:14.92px;top:192.80px;font-size:17.15px;color:#444;transform:scaleX(0.9845);">F2</span>
<span class="t" style="left:344.15px;top:192.80px;font-size:17.15px;color:#444;transform:scaleX(1.0650);">Organisation PAN</span>
<span class="t" style="left:292.57px;top:190.30px;font-size:17.8px;color:#444;transform:scaleX(1.6471);font-style:italic;font-family:'Liberation Serif', serif;">f</span>
<span class="t" style="left:300.63px;top:194.50px;font-size:13.2px;color:#444;transform:scaleX(1.1385);font-weight:700;font-style:italic;font-family:'Liberation Serif', serif;">x</span>
<span class="t" style="left:52.36px;top:267.80px;font-size:17.15px;color:#555;transform:scaleX(0.9097);">Sensitivity:</span>
<span class="t" style="left:158.49px;top:267.80px;font-size:17.15px;color:#333;transform:scaleX(0.9217);font-weight:700;">Internal \ Companywide usage</span>
<span class="t" style="left:148.30px;top:902.90px;font-size:17.73px;color:#1e6e42;transform:scaleX(0.9737);font-weight:700;">Template External Agency(TAN)</span>
<span class="t" style="left:8.96px;top:940.60px;font-size:14.83px;color:#555;transform:scaleX(0.9507);">Ready</span>
<span class="t" style="left:1753.33px;top:939.00px;font-size:14.68px;color:#555;transform:scaleX(0.9496);">90%</span>
</div>
<div class="sheet">
<span class="t" style="left:368.77px;top:316.93px;font-size:16.21px;color:#0c0c0c;transform:scaleX(1.1040);font-weight:700;-webkit-text-stroke:0.35px currentColor;">Input Response</span>
<span class="t" style="left:75.47px;top:336.93px;font-size:16.21px;color:#0c0c0c;transform:scaleX(1.0982);font-weight:700;-webkit-text-stroke:0.35px currentColor;">TAN</span>
<span class="t" style="left:151.44px;top:336.93px;font-size:16.21px;color:#0c0c0c;transform:scaleX(1.1336);font-weight:700;-webkit-text-stroke:0.35px currentColor;">First Name</span>
<span class="t" style="left:255.15px;top:336.93px;font-size:16.21px;color:#0c0c0c;transform:scaleX(1.1207);font-weight:700;-webkit-text-stroke:0.35px currentColor;">Middle Name</span>
<span class="t" style="left:376.65px;top:336.93px;font-size:16.21px;color:#0c0c0c;transform:scaleX(1.1228);font-weight:700;-webkit-text-stroke:0.35px currentColor;">Last Name</span>
<span class="t" style="left:478.25px;top:336.93px;font-size:16.21px;color:#0c0c0c;transform:scaleX(1.1239);font-weight:700;-webkit-text-stroke:0.35px currentColor;">Name of Organisation</span>
<span class="t" style="left:676.30px;top:336.93px;font-size:16.21px;color:#0c0c0c;transform:scaleX(1.1175);font-weight:700;-webkit-text-stroke:0.35px currentColor;">Organisation PAN</span>
<span class="t" style="left:1041.00px;top:318.39px;font-size:15.81px;color:#1c1c1c;transform:scaleX(1.1816);-webkit-text-stroke:0.22px currentColor;">0</span>
<span class="t" style="left:1058.55px;top:356.32px;font-size:20.42px;color:#0c0c0c;transform:scaleX(1.3254);font-weight:700;-webkit-text-stroke:0.35px currentColor;">Instructions</span>
<span class="t" style="left:1057.21px;top:380.79px;font-size:16.1px;color:#16162a;transform:scaleX(1.1704);-webkit-text-stroke:0.22px currentColor;">Upto 100 entries can be made</span>
<span class="t" style="left:1057.41px;top:400.59px;font-size:16.1px;color:#16162a;transform:scaleX(1.1511);-webkit-text-stroke:0.22px currentColor;">No TAN should be repeated</span>
<span class="t" style="left:954.01px;top:466.39px;font-size:16.83px;color:#34321c;transform:scaleX(1.0691);-webkit-text-stroke:0.22px currentColor;">Validate</span>
<span class="t" style="left:926.28px;top:497.99px;font-size:16.54px;color:#34321c;transform:scaleX(1.0317);-webkit-text-stroke:0.22px currentColor;">Generate JSON</span>
<span class="t" style="left:87.06px;top:299.90px;font-size:15.7px;color:#2a2a2a;transform:scaleX(0.9800);-webkit-text-stroke:0.35px currentColor;">A</span>
<span class="t" style="left:193.41px;top:299.90px;font-size:15.7px;color:#2a2a2a;transform:scaleX(0.9800);-webkit-text-stroke:0.35px currentColor;">B</span>
<span class="t" style="left:305.81px;top:299.90px;font-size:15.7px;color:#2a2a2a;transform:scaleX(0.9800);-webkit-text-stroke:0.35px currentColor;">C</span>
<span class="t" style="left:417.07px;top:299.90px;font-size:15.7px;color:#2a2a2a;transform:scaleX(0.9800);-webkit-text-stroke:0.35px currentColor;">D</span>
<span class="t" style="left:567.36px;top:299.90px;font-size:15.7px;color:#2a2a2a;transform:scaleX(0.9800);-webkit-text-stroke:0.35px currentColor;">E</span>
<span class="t" style="left:747.65px;top:299.90px;font-size:15.7px;color:#217346;transform:scaleX(0.9800);-webkit-text-stroke:0.35px currentColor;">F</span>
<span class="t" style="left:870.22px;top:299.90px;font-size:15.7px;color:#2a2a2a;transform:scaleX(0.9800);-webkit-text-stroke:0.35px currentColor;">G</span>
<span class="t" style="left:981.11px;top:299.90px;font-size:15.7px;color:#2a2a2a;transform:scaleX(0.9800);-webkit-text-stroke:0.35px currentColor;">H</span>
<span class="t" style="left:1192.09px;top:299.90px;font-size:15.7px;color:#2a2a2a;transform:scaleX(0.9800);-webkit-text-stroke:0.35px currentColor;">I</span>
<span class="t" style="left:1373.47px;top:299.90px;font-size:15.7px;color:#2a2a2a;transform:scaleX(0.9800);-webkit-text-stroke:0.35px currentColor;">J</span>
<span class="t" style="left:1456.87px;top:299.90px;font-size:15.7px;color:#2a2a2a;transform:scaleX(0.9800);-webkit-text-stroke:0.35px currentColor;">K</span>
<span class="t" style="left:1543.35px;top:299.90px;font-size:15.7px;color:#2a2a2a;transform:scaleX(0.9800);-webkit-text-stroke:0.35px currentColor;">L</span>
<span class="t" style="left:1627.08px;top:299.90px;font-size:15.7px;color:#2a2a2a;transform:scaleX(0.9800);-webkit-text-stroke:0.35px currentColor;">M</span>
<span class="t" style="left:1713.46px;top:299.90px;font-size:15.7px;color:#2a2a2a;transform:scaleX(0.9800);-webkit-text-stroke:0.35px currentColor;">N</span>
<span class="t" style="left:13.87px;top:317.50px;font-size:16.3px;color:#1c1c1c;transform:scaleX(1.0800);-webkit-text-stroke:0.35px currentColor;">1</span>
<span class="t" style="left:14.09px;top:337.50px;font-size:16.3px;color:#217346;transform:scaleX(1.0800);-webkit-text-stroke:0.35px currentColor;">2</span>
<span class="t" style="left:14.14px;top:359.30px;font-size:16.3px;color:#1c1c1c;transform:scaleX(1.0800);-webkit-text-stroke:0.35px currentColor;">3</span>
<span class="t" style="left:14.19px;top:381.01px;font-size:16.3px;color:#1c1c1c;transform:scaleX(1.0800);-webkit-text-stroke:0.35px currentColor;">4</span>
<span class="t" style="left:14.14px;top:400.77px;font-size:16.3px;color:#1c1c1c;transform:scaleX(1.0800);-webkit-text-stroke:0.35px currentColor;">5</span>
<span class="t" style="left:14.03px;top:420.53px;font-size:16.3px;color:#1c1c1c;transform:scaleX(1.0800);-webkit-text-stroke:0.35px currentColor;">6</span>
<span class="t" style="left:14.09px;top:440.29px;font-size:16.3px;color:#1c1c1c;transform:scaleX(1.0800);-webkit-text-stroke:0.35px currentColor;">7</span>
<span class="t" style="left:14.09px;top:460.05px;font-size:16.3px;color:#1c1c1c;transform:scaleX(1.0800);-webkit-text-stroke:0.35px currentColor;">8</span>
<span class="t" style="left:14.14px;top:479.81px;font-size:16.3px;color:#1c1c1c;transform:scaleX(1.0800);-webkit-text-stroke:0.35px currentColor;">9</span>
<span class="t" style="left:8.68px;top:499.57px;font-size:16.3px;color:#1c1c1c;transform:scaleX(1.0999);-webkit-text-stroke:0.35px currentColor;">10</span>
<span class="t" style="left:8.56px;top:519.33px;font-size:16.3px;color:#1c1c1c;transform:scaleX(1.2036);-webkit-text-stroke:0.35px currentColor;">11</span>
<span class="t" style="left:8.66px;top:539.09px;font-size:16.3px;color:#1c1c1c;transform:scaleX(1.1135);-webkit-text-stroke:0.35px currentColor;">12</span>
<span class="t" style="left:8.67px;top:558.85px;font-size:16.3px;color:#1c1c1c;transform:scaleX(1.1067);-webkit-text-stroke:0.35px currentColor;">13</span>
<span class="t" style="left:8.69px;top:578.61px;font-size:16.3px;color:#1c1c1c;transform:scaleX(1.0932);-webkit-text-stroke:0.35px currentColor;">14</span>
<span class="t" style="left:8.67px;top:598.37px;font-size:16.3px;color:#1c1c1c;transform:scaleX(1.1067);-webkit-text-stroke:0.35px currentColor;">15</span>
<span class="t" style="left:8.67px;top:618.13px;font-size:16.3px;color:#1c1c1c;transform:scaleX(1.1067);-webkit-text-stroke:0.35px currentColor;">16</span>
<span class="t" style="left:8.66px;top:637.89px;font-size:16.3px;color:#1c1c1c;transform:scaleX(1.1135);-webkit-text-stroke:0.35px currentColor;">17</span>
<span class="t" style="left:8.67px;top:657.65px;font-size:16.3px;color:#1c1c1c;transform:scaleX(1.1067);-webkit-text-stroke:0.35px currentColor;">18</span>
<span class="t" style="left:8.66px;top:677.41px;font-size:16.3px;color:#1c1c1c;transform:scaleX(1.1135);-webkit-text-stroke:0.35px currentColor;">19</span>
<span class="t" style="left:9.14px;top:697.17px;font-size:16.3px;color:#1c1c1c;transform:scaleX(1.0736);-webkit-text-stroke:0.35px currentColor;">20</span>
<span class="t" style="left:9.13px;top:716.93px;font-size:16.3px;color:#1c1c1c;transform:scaleX(1.0866);-webkit-text-stroke:0.35px currentColor;">21</span>
<span class="t" style="left:9.13px;top:736.69px;font-size:16.3px;color:#1c1c1c;transform:scaleX(1.0866);-webkit-text-stroke:0.35px currentColor;">22</span>
<span class="t" style="left:9.14px;top:756.45px;font-size:16.3px;color:#1c1c1c;transform:scaleX(1.0801);-webkit-text-stroke:0.35px currentColor;">23</span>
<span class="t" style="left:9.15px;top:776.21px;font-size:16.3px;color:#1c1c1c;transform:scaleX(1.0673);-webkit-text-stroke:0.35px currentColor;">24</span>
<span class="t" style="left:9.14px;top:795.97px;font-size:16.3px;color:#1c1c1c;transform:scaleX(1.0801);-webkit-text-stroke:0.35px currentColor;">25</span>
<span class="t" style="left:9.14px;top:815.73px;font-size:16.3px;color:#1c1c1c;transform:scaleX(1.0801);-webkit-text-stroke:0.35px currentColor;">26</span>
<span class="t" style="left:9.13px;top:835.49px;font-size:16.3px;color:#1c1c1c;transform:scaleX(1.0866);-webkit-text-stroke:0.35px currentColor;">27</span>
<span class="t" style="left:9.14px;top:855.25px;font-size:16.3px;color:#1c1c1c;transform:scaleX(1.0801);-webkit-text-stroke:0.35px currentColor;">28</span>
<span class="t" style="left:9.13px;top:875.01px;font-size:16.3px;color:#1c1c1c;transform:scaleX(1.0866);-webkit-text-stroke:0.35px currentColor;">29</span>
</div>
</body></html>
